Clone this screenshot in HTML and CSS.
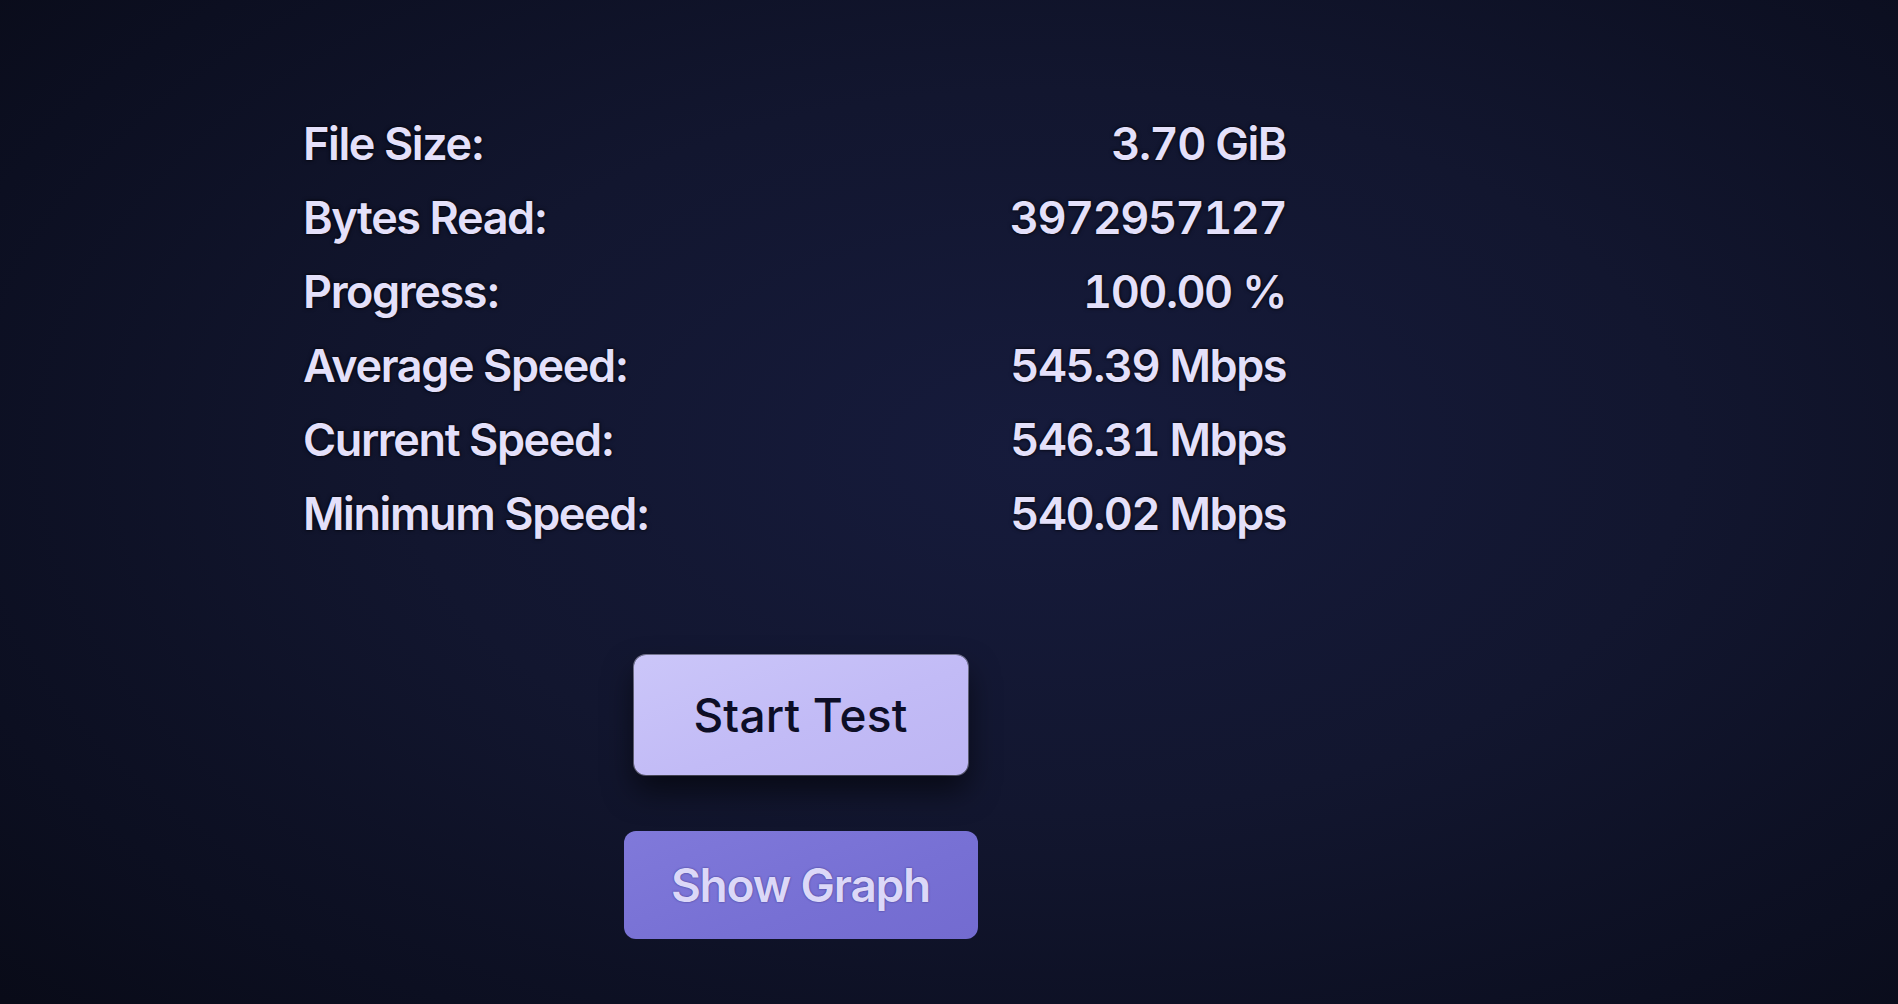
FILE: index.html
```html
<!DOCTYPE html>
<html>
<head>
	<title>Speed Test</title>
	<link rel="stylesheet" href="styles.css">
</head>
<body>
	<div class="wrap">
		<div class="stats">
			<div class="label">File Size:</div>
			<div class="value">3.70 GiB</div>
			<div class="label">Bytes Read:</div>
			<div class="value">3972957127</div>
			<div class="label">Progress:</div>
			<div class="value">100.00 %</div>
			<div class="label">Average Speed:</div>
			<div class="value">545.39 Mbps</div>
			<div class="label">Current Speed:</div>
			<div class="value">546.31 Mbps</div>
			<div class="label">Minimum Speed:</div>
			<div class="value">540.02 Mbps</div>
		</div>

		<div class="actions">
			<button class="btn btn-focused" type="button">Start Test</button>
			<button class="btn btn-plain" type="button">Show Graph</button>
		</div>
	</div>
</body>
</html>
```

FILE: styles.css
```css
html, body {
	height: 100%;
}

body {
	margin: 0;
	overflow: hidden;
	background: radial-gradient(ellipse 75% 80% at 55% 45%, #161b3c 0%, #12162f 45%, #0c0f21 80%, #090b18 100%);
	font-family: Inter, "Noto Sans", sans-serif;
	color: #e4e0fa;
}

.wrap {
	width: 983px;
	margin-left: 303px;
	padding-top: 107px;
}

.stats {
	display: grid;
	grid-template-columns: 1fr auto;
}

.label, .value {
	font-size: 45px;
	font-weight: 600;
	line-height: 74px;
	letter-spacing: -1.4px;
	text-shadow: 0 0 2px #05060f, 0 0 4px rgba(0,0,0,0.7);
}

.value {
	text-align: right;
	font-variant-numeric: tabular-nums;
	letter-spacing: -1.5px;
}

.actions {
	display: flex;
	flex-direction: column;
	align-items: center;
	gap: 56px;
	margin-top: 104px;
	padding-left: 12px;
}

.btn {
	border: none;
	font-family: Inter, "Noto Sans", sans-serif;
	font-size: 46px;
	font-weight: 500;
	cursor: pointer;
	border-radius: 12px;
	-webkit-appearance: none;
	appearance: none;
}

.btn-focused {
	width: 334px;
	height: 120px;
	background: linear-gradient(160deg, #cbc6f9 0%, #c2bbf6 55%, #bdb5f3 100%);
	color: #0d0e26;
	letter-spacing: 0.2px;
	box-shadow: 0 16px 30px rgba(0,0,0,0.55), 0 0 0 1px rgba(230,226,255,0.5);
}

.btn-plain {
	width: 354px;
	height: 108px;
	background: linear-gradient(160deg, #8079da 0%, #7770d4 60%, #736bd0 100%);
	color: #dcd8f8;
	font-weight: 600;
	letter-spacing: -1.2px;
	text-shadow: 0 0 2px rgba(40,36,110,0.8);
}
```
